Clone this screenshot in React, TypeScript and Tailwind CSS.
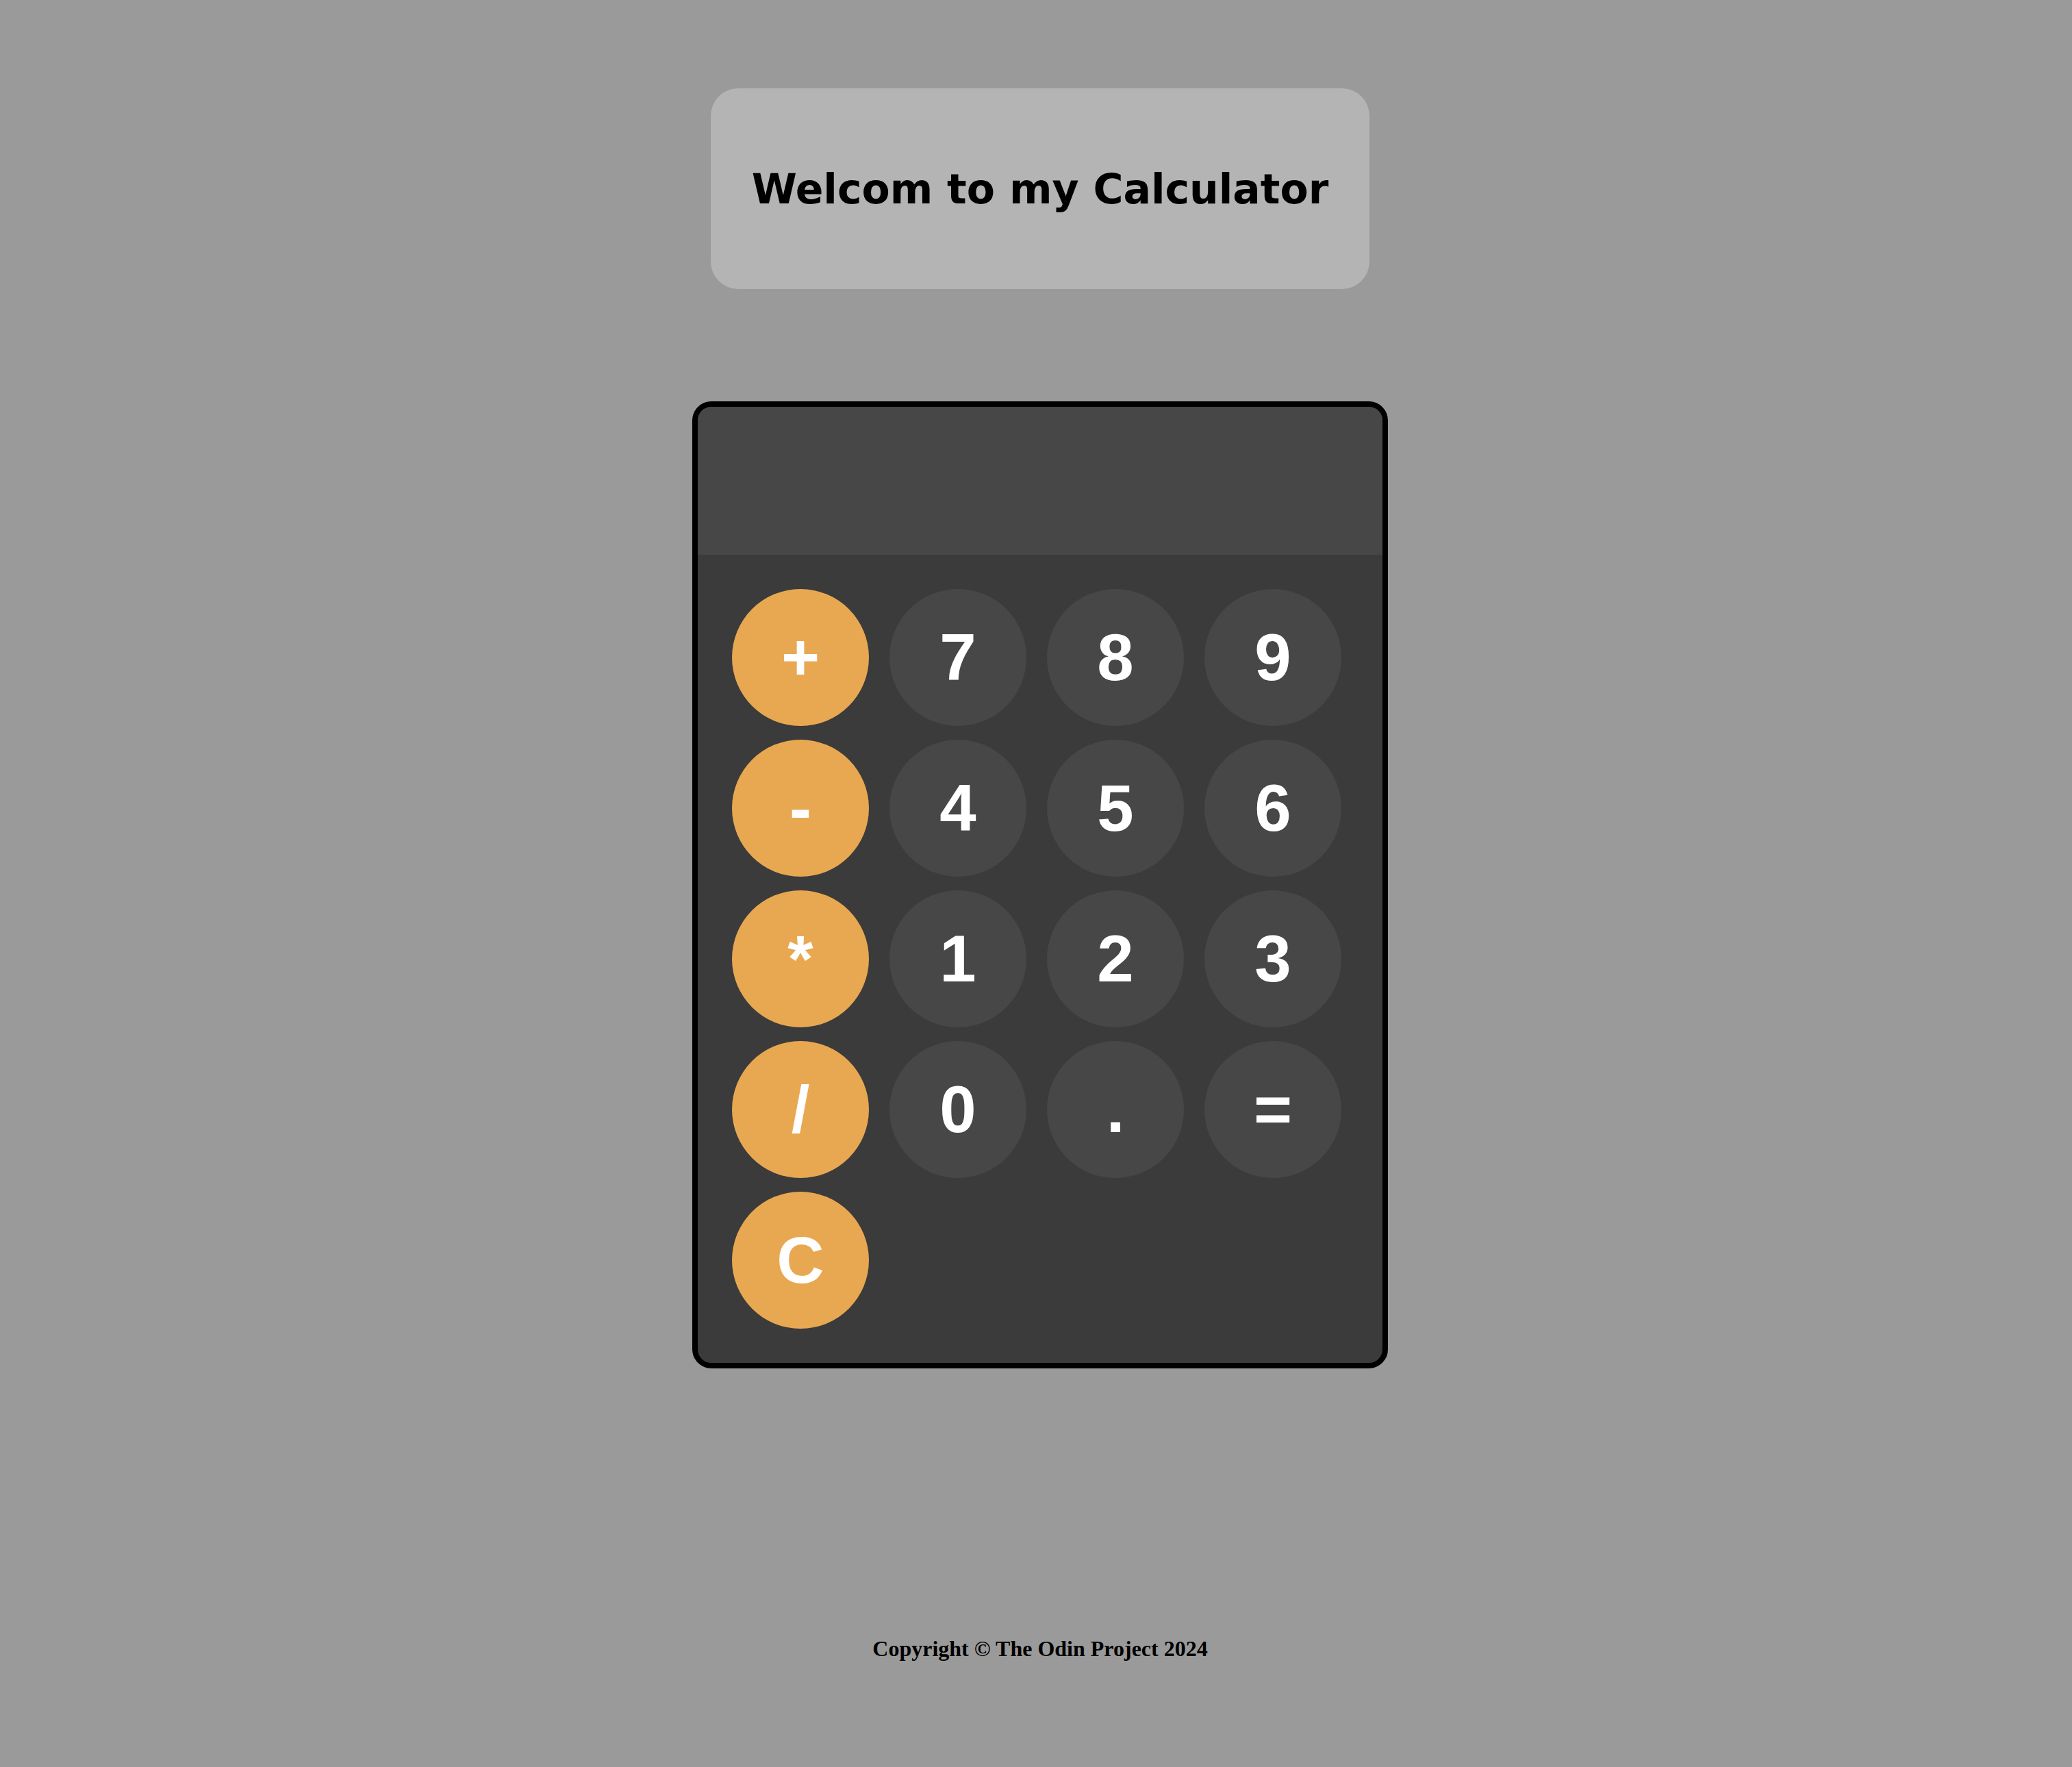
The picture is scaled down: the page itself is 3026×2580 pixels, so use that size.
import React from 'react';

const keys = [
  { label: '+', op: true }, { label: '7' }, { label: '8' }, { label: '9' },
  { label: '-', op: true }, { label: '4' }, { label: '5' }, { label: '6' },
  { label: '*', op: true }, { label: '1' }, { label: '2' }, { label: '3' },
  { label: '/', op: true }, { label: '0' }, { label: '.' }, { label: '=' },
  { label: 'C', op: true },
];

export default function App() {
  return (
    <div className="min-h-screen bg-[#9a9a9a] flex flex-col items-center pl-[12px]">
      {/* Header */}
      <div className="mt-[129px] w-[962px] h-[293px] rounded-[40px] bg-[#b4b4b4] flex items-center justify-center">
        <h1 className="font-['Verdana','DejaVu_Sans',sans-serif] font-bold text-[60px] leading-none text-black">
          Welcom to my Calculator
        </h1>
      </div>

      {/* Calculator */}
      <div className="mt-[164px] w-[1016px] border-[8px] border-black rounded-[28px] overflow-hidden bg-[#3b3b3b]">
        <div className="h-[216px] bg-[#474747]"></div>
        <div className="grid grid-cols-[repeat(4,200px)] gap-x-[30px] gap-y-[20px] pl-[50px] py-[50px]">
          {keys.map((k) => (
            <button
              key={k.label}
              className={`w-[200px] h-[200px] rounded-full flex items-center justify-center text-white font-bold text-[96px] leading-none font-['Arial','Liberation_Sans',sans-serif] ${
                k.op ? 'bg-[#e8a852]' : 'bg-[#474747]'
              }`}
            >
              {k.label}
            </button>
          ))}
        </div>
      </div>

      {/* Footer */}
      <footer className="mt-[393px] font-['Times_New_Roman','Liberation_Serif',serif] font-bold text-[32px] leading-none text-black">
        Copyright © The Odin Project 2024
      </footer>
    </div>
  );
}
